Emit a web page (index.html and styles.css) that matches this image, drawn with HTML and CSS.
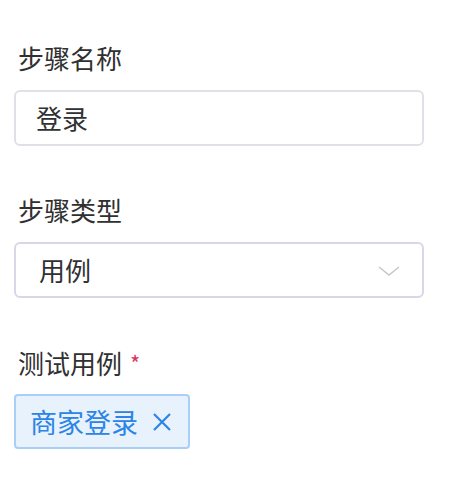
FILE: index.html
```html
<!DOCTYPE html>
<html lang="zh-CN">
<head>
<meta charset="utf-8">
<link rel="stylesheet" href="styles.css">
</head>
<body>
<form class="form">
  <div class="item">
    <label class="label">步骤名称</label>
    <div class="input">登录</div>
  </div>
  <div class="item">
    <label class="label">步骤类型</label>
    <div class="input select">
      <span>用例</span>
      <svg class="chev" width="22" height="10" viewBox="0 0 22 10"><path d="M1 1 L11 9 L21 1" fill="none" stroke="#c3c5cc" stroke-width="1.4"/></svg>
    </div>
  </div>
  <div class="item">
    <label class="label">测试用例<span class="req">*</span></label>
    <div class="tags">
      <span class="tag">商家登录<svg class="close" width="20" height="20" viewBox="0 0 20 20"><path d="M2 2 L18 18 M18 2 L2 18" stroke="currentColor" stroke-width="2.2" fill="none"/></svg></span>
    </div>
  </div>
</form>
</body>
</html>
```
FILE: styles.css
```css
html, body {
  margin: 0;
  padding: 0;
  background: #ffffff;
}
body {
  font-family: "Noto Sans CJK SC", "Noto Sans", sans-serif;
  color: #333333;
}
.form {
  padding: 40px 0 0 14px;
  width: 410px;
}
.item {
  margin-bottom: 46px;
}
.label {
  display: block;
  font-size: 26px;
  line-height: 36px;
  height: 36px;
  margin-bottom: 14px;
  padding-left: 4px;
  color: #303030;
}
.req {
  color: #d9345a;
  font-size: 22px;
  margin-left: 8px;
  vertical-align: 2px;
}
.input {
  box-sizing: border-box;
  height: 56px;
  border: 2px solid #e0e1e7;
  border-radius: 6px;
  padding: 0 22px 0 20px;
  font-size: 26px;
  line-height: 52px;
  color: #303133;
  display: flex;
  align-items: center;
}
.select {
  border-color: #d6d8e8;
  justify-content: space-between;
  padding-left: 23px;
}
.chev {
  display: block;
  margin-top: 2px;
}
.tags {
  display: flex;
}
.tag {
  box-sizing: border-box;
  height: 55px;
  display: inline-flex;
  align-items: center;
  gap: 14px;
  padding: 0 16px 0 14px;
  background: #e8f2fd;
  border: 2px solid #a9cff8;
  border-radius: 4px;
  color: #2b84e6;
  font-size: 27px;
}
.close {
  display: block;
}
```
